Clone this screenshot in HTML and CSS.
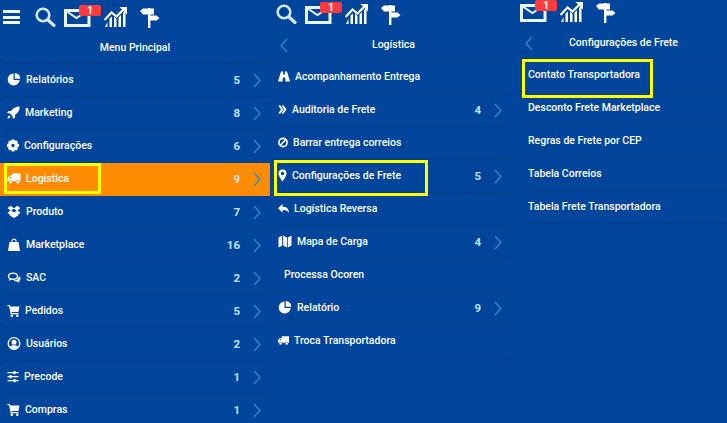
FILE: index.html
```html
<!DOCTYPE html>
<html lang="en">
<head>
	<meta charset="UTF-8">
	<title>Menu</title>
	<link rel="stylesheet" href="styles.css">
</head>
<body>
<svg class="defs" width="0" height="0">
  <symbol id="i-pie" viewBox="0 0 13 13"><path d="M6 0.500a6 6 0 1 0 6.200 6.500H6zM7.300 0a5.500 5.500 0 0 1 5.500 5.700H7.300z"/></symbol>
  <symbol id="i-rocket" viewBox="0 0 13 13"><path d="M12.500 0.500c-3.500 0-6.500 1.500-8.500 4.500H1.500L0 7l3 0.500 2.500 2.500 0.500 3 2-1.500V9c3-2 5-5 4.500-8.500zM2.500 9.500C1 10 0.500 11.500 0.500 12.500c1 0 2.500-0.500 3-2z"/></symbol>
  <symbol id="i-cog" viewBox="0 0 13 13"><path fill-rule="evenodd" d="M5 0h3l0.400 1.700 1.500-0.900 2.100 2.100-0.900 1.500L13 5v3l-1.900 0.400 0.900 1.500-2.100 2.100-1.500-0.900L8 13H5l-0.400-1.900-1.500 0.900L1 9.900l0.900-1.500L0 8V5l1.900-0.600L1 2.900 3.100 0.800l1.500 0.900zM6.500 4.600a1.900 1.900 0 1 0 0 3.800 1.900 1.900 0 0 0 0-3.800z"/></symbol>
  <symbol id="i-truck" viewBox="0 0 13 13"><path fill-rule="evenodd" d="M4.500 1.500H13v7.800h-1a1.800 1.800 0 0 0-3.500 0H4.800a1.800 1.800 0 0 0-3.500 0H0V6l2.200-2.500h2.300zM1.300 6.300H3.400V4.500H2.800zM3 8.600a1.500 1.500 0 1 1 0 3 1.500 1.500 0 0 1 0-3zM10.300 8.600a1.500 1.500 0 1 1 0 3 1.500 1.500 0 0 1 0-3z"/></symbol>
  <symbol id="i-box" viewBox="0 0 13 13"><path d="M3.300 0.800L6.500 3.200 9.700 0.800 13 3 10.200 5.500 13 8 10.700 9.500V10.500L6.500 13 2.300 10.500V9.500L0 8 2.800 5.500 0 3zM6.500 3.800L3.700 5.500 6.500 7.500 9.300 5.500z"/></symbol>
  <symbol id="i-bag" viewBox="0 0 12 13"><path d="M1.500 4H3.500V3a2.500 2.500 0 0 1 5 0v1h2L12 13H0zM4.500 4h3V3a1.500 1.500 0 0 0-3 0z"/></symbol>
  <symbol id="i-chat" viewBox="0 0 13 13"><path fill-rule="evenodd" d="M5.500 1.500c3 0 5.200 1.600 5.200 3.700S8.500 8.900 5.500 8.900c-0.700 0-1.300-0.100-1.800-0.200L1.200 10l0.700-2C0.900 7.300 0.300 6.300 0.300 5.200 0.300 3.100 2.500 1.500 5.500 1.500zM5.500 2.800c-2.200 0-3.900 1.100-3.900 2.400S3.300 7.600 5.500 7.600s3.900-1.100 3.900-2.400S7.700 2.800 5.500 2.800z"/><path d="M11.300 5c1 0.600 1.700 1.500 1.700 2.500 0 1-0.500 1.800-1.400 2.400l0.500 1.800-2.400-1.200c-1.400 0.200-3-0.100-4-0.900 3 0 5.600-1.600 5.600-4.600z"/></symbol>
  <symbol id="i-cart" viewBox="0 0 12 13"><path d="M0 1h2.400l0.400 1.500H12l-1.100 5.500H4l0.200 1H11v1.200H3.200L1.600 2.200H0z"/><circle cx="4.300" cy="11.700" r="1.300"/><circle cx="9.800" cy="11.700" r="1.300"/></symbol>
  <symbol id="i-user" viewBox="0 0 13 13"><path fill-rule="evenodd" d="M6.500 0a6.500 6.500 0 1 1 0 13 6.500 6.500 0 0 1 0-13zM6.500 1.300a5.200 5.200 0 0 0-4 8.500c0.800-1 2-1.500 4-1.500s3.200 0.500 4 1.500a5.200 5.200 0 0 0-4-8.500zM6.500 2.800a2.500 2.500 0 1 1 0 5 2.500 2.500 0 0 1 0-5z"/></symbol>
  <symbol id="i-sliders" viewBox="0 0 11 13"><path d="M0 2h6V1h2v1h3v1.200H8v1H6v-1H0zM0 6h2V5h2v1h7v1.200H4v1H2v-1H0zM0 10h6V9h2v1h3v1.200H8v1H6v-1H0z"/></symbol>
  <symbol id="i-road" viewBox="0 0 12 13"><path d="M3 1.500H5.200L5 4.500h2L6.800 1.500H9L12 11.500H7.400L7.200 7.500H4.800L4.600 11.500H0z"/></symbol>
  <symbol id="i-double" viewBox="0 0 8 13"><path d="M0 3L1.500 2l3.300 4.500L1.500 11 0 10l2.500-3.500zM3.200 3L4.700 2 8 6.500 4.700 11 3.200 10l2.500-3.500z"/></symbol>
  <symbol id="i-ban" viewBox="0 0 11 13"><circle cx="5.500" cy="6.500" r="4.500" fill="none" stroke="#fff" stroke-width="1.800"/><path d="M2.500 9.500l6-6" fill="none" stroke="#fff" stroke-width="1.800"/></symbol>
  <symbol id="i-pin" viewBox="0 0 9 13"><path fill-rule="evenodd" d="M4.500 0.500a4 4 0 0 1 4 4C8.500 7 5.800 10.500 4.500 12.500 3.200 10.500 0.500 7 0.500 4.500a4 4 0 0 1 4-4zM4.500 2.800a1.700 1.700 0 1 0 0 3.400 1.700 1.700 0 0 0 0-3.400z"/></symbol>
  <symbol id="i-reply" viewBox="0 0 12 13"><path d="M5 1.500v3c4 0 7 1.500 7 7.500-1-3-3.200-3.800-7-3.800v3L0 6.300z"/></symbol>
  <symbol id="i-map" viewBox="0 0 13 13"><path d="M0 2.500L3.700 0.500v10L0 12.500zM4.700 0.500l3.700 2v10l-3.700-2zM9.300 2.500L13 0.500v10L9.300 12.500z"/></symbol>

  <symbol id="t-search" viewBox="0 0 21 20"><circle cx="8" cy="8" r="6.300" fill="none" stroke="#d3eafa" stroke-width="2.600"/><path d="M12.800 12.800l6.200 5.700" fill="none" stroke="#d3eafa" stroke-width="3.200" stroke-linecap="round"/></symbol>
  <symbol id="t-mail" viewBox="0 0 27 18"><path d="M1.500 1.500H25v15H1.500z" fill="none" stroke="#eaf6fe" stroke-width="3"/><path d="M2 2l10.500 7L23 2" fill="none" stroke="#eaf6fe" stroke-width="2"/></symbol>
  <symbol id="t-chart" viewBox="0 0 23 20"><path d="M1 20l2.500-5v5zM5.500 20v-8.500L8 9.500V20zM10 20V9.500l2.500 2.500v8zM14.500 20V10.500L17 8V20zM19 20V6l2.500-2V20z" fill="#fff"/><path d="M0.500 13L7.500 5.500l5 4L20 2" fill="none" stroke="#fff" stroke-width="2.200"/><path d="M15.500 0H23V7.500z" fill="#fff"/></symbol>
  <symbol id="t-sign" viewBox="0 0 20 20"><path d="M0 3l3-2.500h11V6.500H3z" fill="#fff"/><path d="M8 7.500h8.500l3 2.500-3 2.500H8z" fill="#fff"/><path d="M8 0h2.400v20H8z" fill="#fff"/></symbol>

  <symbol id="chev" viewBox="0 0 8 15"><path d="M1 1l6 6.500L1 14" fill="none" stroke="#2b8fcb" stroke-width="1.300"/></symbol>
  <symbol id="chev-back" viewBox="0 0 8 15"><path d="M7 1L1 7.500 7 14" fill="none" stroke="#2b8fcb" stroke-width="1.300"/></symbol>
</svg>

<div class="page">
  <!-- menu principal -->
  <div class="panel panel-a">
    <div class="tools">
      <span class="burger"><i></i><i></i><i></i></span>
      <svg class="t-search"><use href="#t-search"/></svg>
      <span class="mail"><svg class="t-mail"><use href="#t-mail"/></svg><b class="badge">1</b></span>
      <svg class="t-chart"><use href="#t-chart"/></svg>
      <svg class="t-sign"><use href="#t-sign"/></svg>
    </div>
    <div class="title">Menu Principal</div>
    <ul class="list">
      <li class="row"><svg class="ic w14"><use href="#i-pie"/></svg><span class="label">Relatórios</span><span class="count">5</span><svg class="chev"><use href="#chev"/></svg></li>
      <li class="row"><svg class="ic w13"><use href="#i-rocket"/></svg><span class="label">Marketing</span><span class="count">8</span><svg class="chev"><use href="#chev"/></svg></li>
      <li class="row"><svg class="ic w12"><use href="#i-cog"/></svg><span class="label">Configurações</span><span class="count">6</span><svg class="chev"><use href="#chev"/></svg></li>
      <li class="row active"><svg class="ic w14"><use href="#i-truck"/></svg><span class="label">Logística</span><span class="count">9</span><svg class="chev"><use href="#chev"/></svg><span class="mark mark-a"></span></li>
      <li class="row"><svg class="ic w14"><use href="#i-box"/></svg><span class="label">Produto</span><span class="count">7</span><svg class="chev"><use href="#chev"/></svg></li>
      <li class="row"><svg class="ic w14"><use href="#i-bag"/></svg><span class="label">Marketplace</span><span class="count">16</span><svg class="chev"><use href="#chev"/></svg></li>
      <li class="row"><svg class="ic w14"><use href="#i-chat"/></svg><span class="label">SAC</span><span class="count">2</span><svg class="chev"><use href="#chev"/></svg></li>
      <li class="row"><svg class="ic w13"><use href="#i-cart"/></svg><span class="label">Pedidos</span><span class="count">5</span><svg class="chev"><use href="#chev"/></svg></li>
      <li class="row"><svg class="ic w14"><use href="#i-user"/></svg><span class="label">Usuários</span><span class="count">2</span><svg class="chev"><use href="#chev"/></svg></li>
      <li class="row"><svg class="ic w12"><use href="#i-sliders"/></svg><span class="label">Precode</span><span class="count">1</span><svg class="chev"><use href="#chev"/></svg></li>
      <li class="row"><svg class="ic w13"><use href="#i-cart"/></svg><span class="label">Compras</span><span class="count">1</span><svg class="chev"><use href="#chev"/></svg></li>
    </ul>
  </div>

  <!-- logistica -->
  <div class="panel panel-b">
    <div class="tools">
      <svg class="t-search"><use href="#t-search"/></svg>
      <span class="mail"><svg class="t-mail"><use href="#t-mail"/></svg><b class="badge">1</b></span>
      <svg class="t-chart"><use href="#t-chart"/></svg>
      <svg class="t-sign"><use href="#t-sign"/></svg>
    </div>
    <div class="title"><svg class="back"><use href="#chev-back"/></svg>Logística</div>
    <ul class="list">
      <li class="row"><svg class="ic w12"><use href="#i-road"/></svg><span class="label">Acompanhamento Entrega</span></li>
      <li class="row"><svg class="ic w9"><use href="#i-double"/></svg><span class="label">Auditoria de Frete</span><span class="count">4</span><svg class="chev"><use href="#chev"/></svg></li>
      <li class="row"><svg class="ic w10"><use href="#i-ban"/></svg><span class="label">Barrar entrega correios</span></li>
      <li class="row"><svg class="ic w9"><use href="#i-pin"/></svg><span class="label">Configurações de Frete</span><span class="count">5</span><svg class="chev"><use href="#chev"/></svg><span class="mark mark-b"></span></li>
      <li class="row"><svg class="ic w11"><use href="#i-reply"/></svg><span class="label">Logística Reversa</span></li>
      <li class="row"><svg class="ic w14"><use href="#i-map"/></svg><span class="label">Mapa de Carga</span><span class="count">4</span><svg class="chev"><use href="#chev"/></svg></li>
      <li class="row"><span class="ic w1"></span><span class="label">Processa Ocoren</span></li>
      <li class="row"><svg class="ic w14"><use href="#i-pie"/></svg><span class="label">Relatório</span><span class="count">9</span><svg class="chev"><use href="#chev"/></svg></li>
      <li class="row"><svg class="ic w11"><use href="#i-truck"/></svg><span class="label">Troca Transportadora</span></li>
    </ul>
  </div>

  <!-- configuracoes de frete -->
  <div class="panel panel-c">
    <div class="tools">
      <span class="mail"><svg class="t-mail"><use href="#t-mail"/></svg><b class="badge">1</b></span>
      <svg class="t-chart"><use href="#t-chart"/></svg>
      <svg class="t-sign"><use href="#t-sign"/></svg>
    </div>
    <div class="title"><svg class="back"><use href="#chev-back"/></svg>Configurações de Frete</div>
    <ul class="list">
      <li class="row"><span class="label">Contato Transportadora</span><span class="mark mark-c"></span></li>
      <li class="row"><span class="label">Desconto Frete Marketplace</span></li>
      <li class="row"><span class="label">Regras de Frete por CEP</span></li>
      <li class="row"><span class="label">Tabela Correios</span></li>
      <li class="row"><span class="label">Tabela Frete Transportadora</span></li>
    </ul>
  </div>
</div>
</body>
</html>
```

FILE: styles.css
```css
* {
  margin: 0;
  padding: 0;
  box-sizing: border-box;
}

html, body {
  height: 100%;
  overflow: hidden;
}

body {
  background-color: #00459c;
  color: #fff;
  font-family: Roboto, "Liberation Sans", sans-serif;
  font-size: 10.5px;
  font-weight: 500;
}

ul {
  list-style: none;
}

svg {
  fill: currentColor;
}

.defs {
  display: block;
  height: 0;
}

.page {
  display: flex;
  height: 423px;
}

.panel {
  flex: none;
}

.panel-a {
  width: 270px;
  padding-top: 5px;
}

.panel-b {
  width: 241px;
  padding-top: 2px;
}

.panel-c {
  width: 216px;
}

/* barra de icones */
.tools {
  display: flex;
  align-items: flex-start;
  height: 27px;
}

.panel-a .tools {
  padding-left: 3px;
}

.panel-b .tools {
  padding-left: 6px;
}

.panel-c .tools {
  padding-left: 9px;
}

.burger {
  display: flex;
  flex-direction: column;
  justify-content: space-between;
  width: 17px;
  height: 14px;
  margin: 5px 15px 0 0;
}

.burger i {
  display: block;
  height: 3px;
  background-color: #f2f9fe;
}

.t-search {
  width: 21px;
  height: 20px;
  margin: 2px 8px 0 0;
}

.mail {
  position: relative;
  width: 27px;
  height: 18px;
  margin: 4px 13px 0 0;
}

.t-mail {
  display: block;
  width: 27px;
  height: 18px;
}

.badge {
  position: absolute;
  left: 15px;
  top: -4px;
  width: 22px;
  height: 11px;
  border-radius: 2px;
  background-color: #ff3b3f;
  font-size: 10px;
  line-height: 11px;
  text-align: center;
}

.t-chart {
  width: 23px;
  height: 20px;
  margin: 2px 13px 0 0;
}

.t-sign {
  width: 20px;
  height: 20px;
  margin-top: 3px;
}

/* titulo do painel */
.title {
  position: relative;
  height: 32px;
  border-bottom: 1px solid #013c8a;
  line-height: 32px;
  text-align: center;
}

.panel-a .title {
  margin-left: 4px;
  padding-right: 4px;
}

.panel-b .title {
  margin-left: 4px;
  padding-left: 2px;
}

.panel-c .title {
  margin-left: 9px;
}

.back {
  position: absolute;
  width: 8px;
  height: 15px;
  top: 9px;
}

.panel-b .back {
  left: 6px;
}

.panel-c .back {
  left: 5px;
}

/* linhas */
.row {
  position: relative;
  display: flex;
  align-items: center;
  height: 33px;
  padding: 0 9px 2px 7px;
  border-bottom: 1px solid #013c8a;
}

.panel-a .row {
  margin-left: 4px;
  padding-left: 3px;
}

.panel-b .row {
  margin-left: 4px;
  padding-left: 4px;
}

.panel-c .row {
  margin-left: 9px;
  padding-left: 8px;
}

.panel-a .row.active {
  margin-left: 0;
  padding-left: 7px;
  border-bottom-color: #ff8c00;
  background-color: #ff8c00;
}

.ic {
  flex: none;
  height: 13px;
  margin-right: 5px;
}

.w1 { width: 1px; }
.w9 { width: 9px; }
.w10 { width: 10px; }
.w11 { width: 11px; }
.w12 { width: 12px; }
.w13 { width: 13px; }
.w14 { width: 14px; }

.label {
  flex: 1;
  white-space: nowrap;
}

.count {
  margin-top: 2px;
  font-size: 11.5px;
  font-weight: 700;
  color: #c3e2f6;
}

.chev {
  flex: none;
  width: 8px;
  height: 15px;
  margin: 2px 0 0 13px;
}

/* marcacao amarela por cima do print */
.mark {
  position: absolute;
  border: 3px solid #ffff00;
}

.panel-a .mark-a {
  left: 4px;
  top: 0;
  width: 97px;
  height: 31px;
}

.mark-b {
  left: 0;
  top: 0;
  width: 154px;
  height: 36px;
}

.mark-c {
  left: 2px;
  top: 0;
  width: 131px;
  height: 39px;
}
```
